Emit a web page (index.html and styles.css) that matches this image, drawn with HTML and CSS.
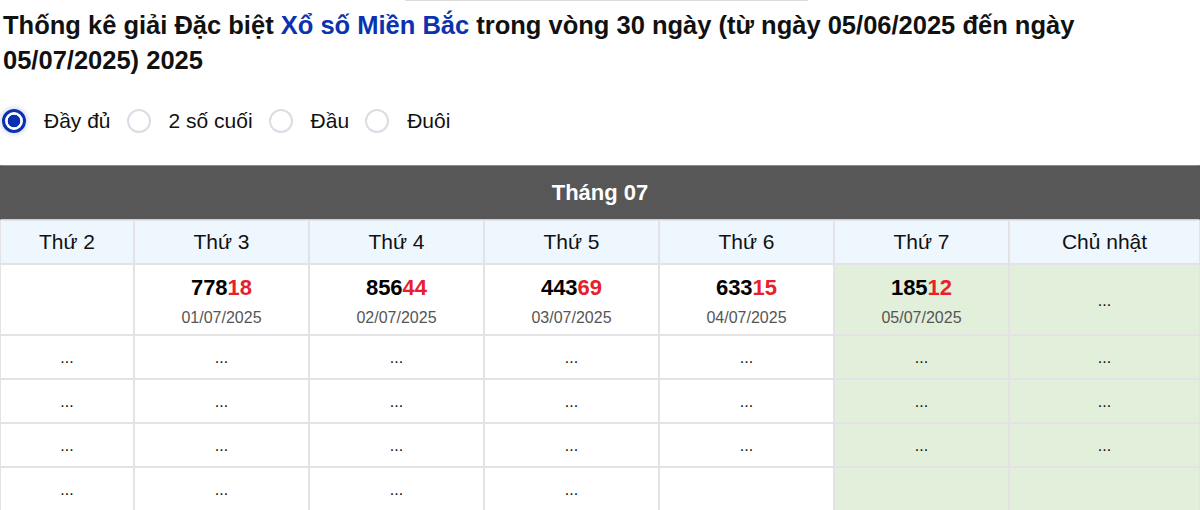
FILE: index.html
```html
<!DOCTYPE html>
<html lang="vi">
<head>
<meta charset="utf-8">
<title>Thống kê giải Đặc biệt</title>
<link rel="stylesheet" href="styles.css">
</head>
<body>
<div class="topline"></div>
<h1 class="title">Thống kê giải Đặc biệt <a class="link" href="#">Xổ số Miền Bắc</a> trong vòng 30 ngày (từ ngày 05/06/2025 đến ngày 05/07/2025) 2025</h1>
<div class="options">
  <label class="opt"><span class="radio checked"></span><span class="opt-label">Đầy đủ</span></label>
  <label class="opt"><span class="radio"></span><span class="opt-label">2 số cuối</span></label>
  <label class="opt"><span class="radio"></span><span class="opt-label">Đầu</span></label>
  <label class="opt"><span class="radio"></span><span class="opt-label">Đuôi</span></label>
</div>
<table class="cal">
  <colgroup>
    <col class="c1"><col class="cn"><col class="cn"><col class="cn"><col class="cn"><col class="cn"><col class="clast">
  </colgroup>
  <thead>
    <tr><th class="month" colspan="7">Tháng 07</th></tr>
    <tr class="days"><th>Thứ 2</th><th>Thứ 3</th><th>Thứ 4</th><th>Thứ 5</th><th>Thứ 6</th><th>Thứ 7</th><th>Chủ nhật</th></tr>
  </thead>
  <tbody>
    <tr class="first">
      <td></td>
      <td><div class="num">778<span class="red">18</span></div><div class="date">01/07/2025</div></td>
      <td><div class="num">856<span class="red">44</span></div><div class="date">02/07/2025</div></td>
      <td><div class="num">443<span class="red">69</span></div><div class="date">03/07/2025</div></td>
      <td><div class="num">633<span class="red">15</span></div><div class="date">04/07/2025</div></td>
      <td class="wk"><div class="num">185<span class="red">12</span></div><div class="date">05/07/2025</div></td>
      <td class="wk">...</td>
    </tr>
    <tr><td>...</td><td>...</td><td>...</td><td>...</td><td>...</td><td class="wk">...</td><td class="wk">...</td></tr>
    <tr><td>...</td><td>...</td><td>...</td><td>...</td><td>...</td><td class="wk">...</td><td class="wk">...</td></tr>
    <tr><td>...</td><td>...</td><td>...</td><td>...</td><td>...</td><td class="wk">...</td><td class="wk">...</td></tr>
    <tr><td>...</td><td>...</td><td>...</td><td>...</td><td></td><td class="wk"></td><td class="wk"></td></tr>
  </tbody>
</table>
</body>
</html>
```
FILE: styles.css
```css
* { box-sizing: border-box; }
html, body { margin: 0; padding: 0; background: #fff; }
body { font-family: "Liberation Sans", Arial, sans-serif; color: #111; width: 1200px; overflow: hidden; }

.topline { width: 403px; height: 1px; margin-left: 405px; background: #dcdcdc; }

.title {
  margin: 7px 0 0;
  padding: 0 3px;
  font-size: 25.5px;
  line-height: 35px;
  font-weight: bold;
  color: #111;
}
.link { color: #0b33b0; text-decoration: none; }

.options {
  display: flex;
  align-items: center;
  height: 42px;
  margin-top: 22px;
  padding-left: 2px;
}
.opt { display: flex; align-items: center; margin-right: 16px; cursor: pointer; }
.radio {
  width: 24px; height: 24px;
  border-radius: 50%;
  border: 2px solid #dadde3;
  background: #fff;
  flex: none;
}
.radio.checked {
  border: 3px solid #0a2fb0;
  background: radial-gradient(circle, #0a2fb0 0 6px, #fff 6.6px);
  box-shadow: 0 0 4px 2px rgba(10, 47, 176, 0.15);
}
.opt-label { margin-left: 18px; font-size: 21px; color: #111; }

.cal {
  margin-top: 23px;
  width: 1200px;
  table-layout: fixed;
  border-collapse: separate;
  border-spacing: 0;
}
.c1 { width: 134px; }
.cn { width: 175px; }
.clast { width: 191px; }

.cal th, .cal td { border: 1px solid #e3e3e6; text-align: center; padding: 0; }
.month {
  background: #575757;
  color: #fff;
  font-size: 22px;
  font-weight: bold;
  height: 55px;
  border-color: #8a8a8a #575757 #d0d0d0 !important;
}
.days th {
  background: #eef6fe;
  font-weight: normal;
  font-size: 21px;
  color: #111;
  height: 44px;
}
.cal td { height: 44px; font-size: 16px; color: #111; padding-top: 2px; }
.cal tr.first td { height: 71px; padding-top: 2px; }
.cal td.wk { background: #e1efdb; }
.num { font-size: 22px; font-weight: bold; color: #000; line-height: 26px; }
.red { color: #e8202a; }
.date { font-size: 16px; color: #555; margin-top: 8px; line-height: 18px; }
```
